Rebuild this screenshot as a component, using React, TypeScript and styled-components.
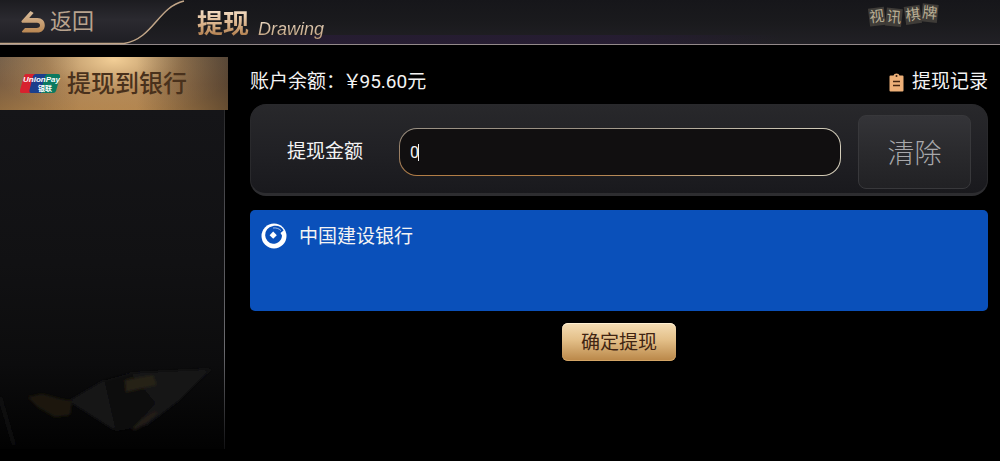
import React, { useState } from "react";
import styled, { createGlobalStyle } from "styled-components";

const GlobalStyle = createGlobalStyle`
  * { box-sizing: border-box; }
  body {
    margin: 0;
    background: #000;
    color: #f4f4f4;
    font-family: Roboto, "Noto Sans CJK SC", sans-serif;
    font-size: 19px;
    line-height: 24px;
  }
  button, input { font: inherit; color: inherit; }
  h1, p { margin: 0; }
`;

const Page = styled.div`
  display: flex;
  flex-direction: column;
  min-height: 100vh;
`;

const Header = styled.header`
  position: relative;
  display: flex;
  align-items: center;
  height: 45px;
  padding-right: 62px;
  border-bottom: 1px solid #93898a;
  background:
    linear-gradient(90deg, transparent 24%, rgba(40, 28, 54, 0.75) 33%, rgba(40, 28, 54, 0.75) 62%, transparent 78%) 0 100% / 100% 9px no-repeat,
    linear-gradient(#16161a, #1a1a1d 50%, #212025);
`;

const TabShape = styled.svg`
  position: absolute;
  left: 0;
  top: 0;
`;

const BackButton = styled.button`
  position: relative;
  display: flex;
  align-items: center;
  gap: 4px;
  width: 197px;
  height: 42px;
  padding: 0 0 1px 21px;
  border: 0;
  background: none;
  color: #b8a38e;
  font-size: 22px;
  cursor: pointer;
`;

const goldText = `
  -webkit-background-clip: text;
  background-clip: text;
  color: transparent;
`;

const Title = styled.h1`
  background-image: linear-gradient(#f3dcc3 20%, #d8b189 55%, #a87340 90%);
  ${goldText}
  font-size: 26px;
  line-height: 36px;
  font-weight: 700;
  padding-top: 3px;
`;

const Subtitle = styled.p`
  background-image: linear-gradient(#e6d2bb 50%, #b99670);
  ${goldText}
  margin-left: 8px;
  padding: 13px 4px 0 1px;
  font-size: 18px;
  font-family: "Liberation Sans", sans-serif;
  font-style: italic;
`;

const Brand = styled.div`
  display: flex;
  gap: 3px;
  margin-left: auto;
  padding-bottom: 13px;
`;

const BrandPair = styled.div<{ $tilt: number }>`
  display: flex;
  gap: 1px;
  transform: rotate(${(p) => p.$tilt}deg);

  &:first-child {
    padding-top: 3px;
  }
`;

const Tile = styled.span<{ $tilt: number }>`
  width: 16px;
  height: 18px;
  background: #3f3c38;
  color: #b9ae94;
  font-size: 15px;
  line-height: 18px;
  text-align: center;
  transform: rotate(${(p) => p.$tilt}deg);
`;

const Body = styled.div`
  display: flex;
  flex: 1;
`;

const Sidebar = styled.nav`
  display: flex;
  flex-direction: column;
  width: 228px;
  padding: 12px 0;
`;

const SideTab = styled.a`
  display: flex;
  align-items: center;
  gap: 6px;
  height: 53px;
  padding-left: 20px;
  background:
    linear-gradient(90deg, rgba(20, 16, 14, 0.2), transparent 35%, transparent 60%, rgba(30, 24, 20, 0.5)),
    radial-gradient(ellipse 55% 110% at 50% 5%, #f2ce96, rgba(206, 158, 96, 0.5) 55%, transparent),
    linear-gradient(#8a725a, #977350 50%, #b0834d);
  color: #49311c;
  font-size: 24px;
  line-height: 30px;
  font-weight: 500;
  text-decoration: none;
`;

const SideArt = styled.div`
  display: flex;
  flex: 1;
  align-items: flex-end;
  margin-right: 3px;
  border-right: 1px solid;
  border-image: linear-gradient(#2a2a2c, #4c4c50 30%, #6c6c70 70%, #101012) 1;
  background: linear-gradient(#151518, #111113 45%, #0c0c0d 75%, #020202);
`;

const Main = styled.main`
  display: flex;
  flex: 1;
  flex-direction: column;
  padding: 25px 12px 0 22px;
`;

const BalanceRow = styled.div`
  display: flex;
  justify-content: space-between;
  margin-bottom: 10px;
`;

const Currency = styled.span`
  font-feature-settings: "palt";
`;

const RecordLink = styled.a`
  display: flex;
  align-items: center;
  gap: 8px;
  color: inherit;
  text-decoration: none;
`;

const AmountPanel = styled.form`
  display: flex;
  align-items: center;
  height: 92px;
  padding: 6px 16px 0 36px;
  border: 1px solid #29292c;
  border-bottom: 3px solid #2d2d30;
  border-radius: 16px;
  background: linear-gradient(#28282b, #212125 50%, #19191d);
`;

const AmountLabel = styled.label`
  width: 112px;
`;

const AmountBox = styled.div`
  position: relative;
  flex: 1;
  height: 48px;
  margin-right: 17px;
  padding: 1px;
  border-radius: 18px;
  background: linear-gradient(90deg, rgba(225, 215, 195, 0) 40%, #d4cebb), linear-gradient(#9a9184, #9a7d60 60%, #b27d45);
`;

const AmountInput = styled.input`
  display: block;
  width: 100%;
  height: 46px;
  padding: 0 10px;
  border: 0;
  border-radius: 17px;
  outline: 0;
  background: #110f10;
  font-size: 16px;
  caret-color: transparent;
`;

const Caret = styled.span`
  position: absolute;
  left: 19px;
  top: 16px;
  width: 1px;
  height: 17px;
  background: #f0f0f0;
`;

const ClearButton = styled.button`
  width: 113px;
  height: 74px;
  padding: 3px 0 0;
  border: 1px solid #38383b;
  border-radius: 8px;
  background: linear-gradient(#343438, #2a2a2d 50%, #212124);
  color: #a8a8ab;
  font-size: 27px;
  line-height: 36px;
  font-weight: 300;
  cursor: pointer;
`;

const BankCard = styled.button`
  display: flex;
  align-items: flex-start;
  gap: 12px;
  height: 101px;
  margin-top: 14px;
  padding: 13px 11px;
  border: 0;
  border-radius: 5px;
  background: #0a50ba;
  text-align: left;
  cursor: pointer;
`;

const BankName = styled.span`
  padding-top: 2px;
`;

const SubmitButton = styled.button`
  align-self: center;
  width: 114px;
  height: 38px;
  margin-top: 12px;
  padding: 1px 0 0;
  border: 0;
  border-radius: 6px;
  background: linear-gradient(#f4ddb5, #e3bf88 45%, #b98647);
  box-shadow: inset 0 1px 0 #fff0d2, inset 0 -1px 0 #d3a566;
  color: #402412;
  cursor: pointer;
`;

const BackIcon = () => (
  <svg width="25" height="22" viewBox="0 0 25 22" fill="none" aria-hidden="true">
    <defs>
      <linearGradient id="gold" x1="0" y1="0" x2="0" y2="1">
        <stop offset="0" stopColor="#d9bd9d" />
        <stop offset="1" stopColor="#b98651" />
      </linearGradient>
    </defs>
    <path
      d="M9.5 0 12.600 2 8.200 7H16.500C20.800 7 23.800 10 23.800 14.200 23.800 18.600 20.800 21.600 16.400 21.600H1.500L.8 20.600 4 17H15.500C17.800 17 19 16 19 14.300 19 12.700 17.800 11.800 16 11.800H1L.3 10.200Z"
      fill="url(#gold)"
    />
  </svg>
);

const UnionPayLogo = () => (
  <svg width="41" height="21" viewBox="0 0 41 21" role="img" aria-label="UnionPay">
    <path d="M6 1H17L11 20H2Q-1 20 0 17L4 3Q4.600 1 6 1Z" fill="#d8222e" />
    <path d="M16 1H28L23 20H11Q9 20 9.500 17L13 3Q14 1 16 1Z" fill="#1b3f8c" />
    <path d="M28 1H38Q40.500 1 40 4L36 18Q35.400 20 33 20H22Q20.500 20 21 17L25 3Q26 1 28 1Z" fill="#0b7a60" />
    <text x="3" y="9" fontFamily="Liberation Sans, sans-serif" fontSize="8" fontWeight="700" fontStyle="italic" fill="#fff">UnionPay</text>
    <text x="18" y="18" fontFamily="Noto Sans CJK SC, sans-serif" fontSize="7" fontWeight="700" fill="#fff">银联</text>
  </svg>
);

const CasinoArt = () => (
  <svg width="224" height="120" viewBox="0 0 224 120" aria-hidden="true">
    <defs>
      <filter id="haze" x="-5%" y="-5%" width="110%" height="110%">
        <feGaussianBlur stdDeviation="1.500" />
      </filter>
    </defs>
    <g filter="url(#haze)">
      <path d="M69 72 103 52 132 44 211 40 178 72 147 96 116 102Z" fill="#121213" />
      <path d="M105 52 132 46 155 74 134 98 116 101Z" fill="#0a0a0a" />
      <path d="M125 51 153 46 157 56 126 63Z" fill="#262218" />
      <path d="M28 68 42 65 60 70 72 72 70 86 55 88 38 78Z" fill="#1f1911" />
      <path d="M132 100 142 90 155 82 158 85 145 95 135 101Z" fill="#221b13" />
      <path d="M0 68 14 116" stroke="#151517" strokeWidth="2" />
    </g>
  </svg>
);

const RecordIcon = () => (
  <svg width="15" height="19" viewBox="0 0 15 19" aria-hidden="true">
    <path d="M1.500 2.500H4.500Q5 .5 7.500.5T10.500 2.500H13.500Q14.500 2.500 14.500 3.500V17.500Q14.500 18.500 13.500 18.500H1.500Q.5 18.500.5 17.500V3.500Q.5 2.500 1.500 2.500Z" fill="#eeb078" />
    <circle cx="7.500" cy="3" r="1" fill="#3a2211" />
    <path d="M4 8.500H11M4 12.500H11" stroke="#442510" strokeWidth="1.500" />
  </svg>
);

const BankIcon = () => (
  <svg width="26" height="26" viewBox="0 0 26 26" aria-hidden="true">
    <circle cx="13" cy="13" r="12.500" fill="#fff" />
    <path d="M11.500 3.200C16.500 2 21 4 22.600 7.500L19.500 10 21 12.500C20.800 17.500 17 20.800 12 20.800A8.900 8.900 0 0 1 11.500 3.200Z" fill="#0a50ba" />
    <path d="M12.200 8.600 15.800 12.200 12.200 15.800 8.600 12.200Z" fill="#fff" />
    <path d="M12 5C15 4.600 18 5.500 20 7.600" stroke="#fff" strokeWidth="1" fill="none" opacity=".6" />
  </svg>
);

export default function App() {
  const [amount, setAmount] = useState("0");
  return (
    <Page>
      <GlobalStyle />
      <Header>
        <TabShape width="190" height="45" viewBox="0 0 190 45" aria-hidden="true">
          <defs>
            <linearGradient id="tab" x1="0" y1="0" x2="0" y2="1">
              <stop offset="0" stopColor="#1c1c20" />
              <stop offset=".45" stopColor="#2b2a30" />
              <stop offset="1" stopColor="#1e1e23" />
            </linearGradient>
          </defs>
          <path d="M0 0H184C160 6 156 37 125 44H0Z" fill="url(#tab)" />
          <path d="M0 43.500H124C153 39 158 7 184 1" fill="none" stroke="#c2a688" strokeWidth="1.500" />
        </TabShape>
        <BackButton type="button">
          <BackIcon />
          返回
        </BackButton>
        <Title>提现</Title>
        <Subtitle>Drawing</Subtitle>
        <Brand>
          <BrandPair $tilt={2}>
            <Tile $tilt={-9}>视</Tile>
            <Tile $tilt={4}>讯</Tile>
          </BrandPair>
          <BrandPair $tilt={-6}>
            <Tile $tilt={-2}>棋</Tile>
            <Tile $tilt={12}>牌</Tile>
          </BrandPair>
        </Brand>
      </Header>
      <Body>
        <Sidebar>
          <SideTab href="#bank">
            <UnionPayLogo />
            提现到银行
          </SideTab>
          <SideArt>
            <CasinoArt />
          </SideArt>
        </Sidebar>
        <Main>
          <BalanceRow>
            <p>账户余额：<Currency>￥</Currency>95.60元</p>
            <RecordLink href="#records">
              <RecordIcon />
              提现记录
            </RecordLink>
          </BalanceRow>
          <AmountPanel onSubmit={(e) => e.preventDefault()}>
            <AmountLabel htmlFor="amount">提现金额</AmountLabel>
            <AmountBox>
              <AmountInput id="amount" inputMode="decimal" value={amount} onChange={(e) => setAmount(e.target.value)} />
              <Caret />
            </AmountBox>
            <ClearButton type="button" onClick={() => setAmount("")}>清除</ClearButton>
          </AmountPanel>
          <BankCard type="button">
            <BankIcon />
            <BankName>中国建设银行</BankName>
          </BankCard>
          <SubmitButton type="button">确定提现</SubmitButton>
        </Main>
      </Body>
    </Page>
  );
}
